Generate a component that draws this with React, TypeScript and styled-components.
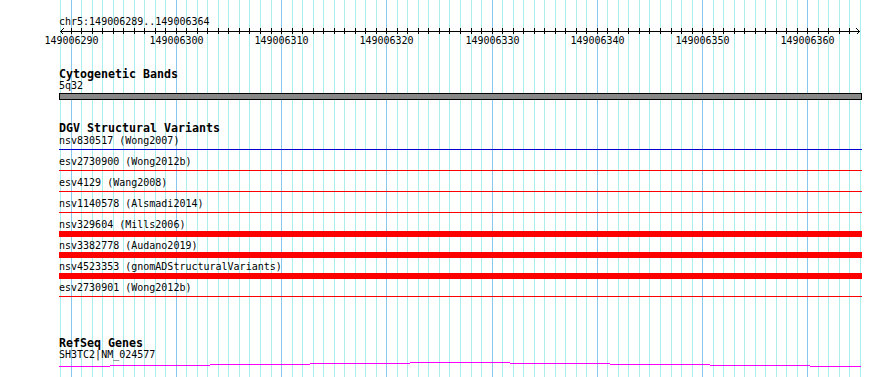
import React from "react";
import styled, { createGlobalStyle } from "styled-components";

const START = 149006289;
const END = 149006364;
const VIEW_LEFT = 60;
const VIEW_WIDTH = 800;
const TRACK_LEFT = 59;
const TRACK_WIDTH = 803;
const BP = VIEW_WIDTH / (END - START + 1);
const BASES = END - START + 1;

// pixel centre of the gridline for base offset i
const xAt = (i: number) => Math.round(VIEW_LEFT + i * BP) + 0.5;

const GlobalStyle = createGlobalStyle`
  html, body {
    margin: 0;
    padding: 0;
    background: #ffffff;
  }
`;

const variants = [
  { name: "nsv830517 (Wong2007)", color: "#0000cc", thick: false },
  { name: "esv2730900 (Wong2012b)", color: "#ff0000", thick: false },
  { name: "esv4129 (Wang2008)", color: "#ff0000", thick: false },
  { name: "nsv1140578 (Alsmadi2014)", color: "#ff0000", thick: false },
  { name: "nsv329604 (Mills2006)", color: "#ff0000", thick: true },
  { name: "nsv3382778 (Audano2019)", color: "#ff0000", thick: true },
  { name: "nsv4523353 (gnomADStructuralVariants)", color: "#ff0000", thick: true },
  { name: "esv2730901 (Wong2012b)", color: "#ff0000", thick: false },
];

// transcript drawn as a slightly sloped 1px line (x from, x to, y)
const geneSteps: [number, number, number][] = [
  [59, 110, 366],
  [110, 210, 365],
  [210, 310, 364],
  [310, 410, 363],
  [410, 510, 362],
  [510, 610, 363],
  [610, 710, 364],
  [710, 810, 365],
  [810, 861, 366],
];

export default function App() {
  const offsets = Array.from({ length: BASES + 1 }, (_, i) => i);

  return (
    <Page>
      <GlobalStyle />
      <Grid width={890} height={377}>
        {offsets.map((i) => (
          <line
            key={i}
            x1={xAt(i)}
            x2={xAt(i)}
            y1={0}
            y2={377}
            stroke={(START + i) % 10 === 0 ? "#88c8ee" : "#aaeeee"}
            strokeWidth={1}
          />
        ))}
      </Grid>

      <Tracks>
        <Locus>chr5:149006289..149006364</Locus>
        <Axis width={TRACK_WIDTH} height={20}>
          <line x1={1} x2={801} y1={3.5} y2={3.5} stroke="#000" />
          <polyline points="4.5,0.5 1.5,3.5 4.5,6.5" fill="none" stroke="#000" />
          <polyline points="797.5,0.5 800.5,3.5 797.5,6.5" fill="none" stroke="#000" />
          {offsets.slice(1, BASES).map((i) => (
            <line
              key={i}
              x1={xAt(i) - TRACK_LEFT}
              x2={xAt(i) - TRACK_LEFT}
              y1={0}
              y2={6}
              stroke="#000"
            />
          ))}
          {offsets
            .filter((i) => (START + i) % 10 === 0)
            .map((i) => (
              <AxisLabel key={i} x={xAt(i) - TRACK_LEFT} y={16} textAnchor="middle">
                {START + i}
              </AxisLabel>
            ))}
        </Axis>

        <Track $top={20}>
          <TrackTitle>Cytogenetic Bands</TrackTitle>
          <TrackLabel>5q32</TrackLabel>
          <Band />
        </Track>

        <Track $top={22}>
          <TrackTitle>DGV Structural Variants</TrackTitle>
          <Rows>
            {variants.map((v) => (
              <Row key={v.name}>
                <TrackLabel>{v.name}</TrackLabel>
                <Feature $color={v.color} $thick={v.thick} />
              </Row>
            ))}
          </Rows>
        </Track>

        <Track $top={34}>
          <TrackTitle>RefSeq Genes</TrackTitle>
          <TrackLabel>SH3TC2|NM_024577</TrackLabel>
          <Gene width={TRACK_WIDTH} height={6}>
            {geneSteps.map(([x1, x2, y]) => (
              <rect
                key={x1}
                x={x1 - TRACK_LEFT}
                y={y - 361}
                width={x2 - x1}
                height={1}
                fill="#ff00ff"
              />
            ))}
          </Gene>
        </Track>
      </Tracks>
    </Page>
  );
}

const Page = styled.div`
  position: relative;
  width: 890px;
  height: 377px;
  overflow: hidden;
  background: #ffffff;
  color: #000000;
  font-family: "DejaVu Sans Mono", "Liberation Mono", monospace;
`;

const Grid = styled.svg`
  position: absolute;
  top: 0;
  left: 0;
  shape-rendering: crispEdges;
`;

const Tracks = styled.div`
  position: relative;
  display: flex;
  flex-direction: column;
  width: ${TRACK_WIDTH}px;
  padding-left: ${TRACK_LEFT}px;
`;

const Locus = styled.div`
  margin-top: 16px;
  font-size: 10px;
  line-height: 12px;
  white-space: nowrap;
`;

const Axis = styled.svg`
  display: block;
  shape-rendering: crispEdges;
  overflow: visible;
`;

const AxisLabel = styled.text`
  font-family: "DejaVu Sans Mono", "Liberation Mono", monospace;
  font-size: 10px;
  fill: #000000;
`;

const Track = styled.section<{ $top: number }>`
  display: flex;
  flex-direction: column;
  margin-top: ${(p) => p.$top}px;
`;

const TrackTitle = styled.div`
  font-size: 11.63px;
  font-weight: bold;
  line-height: 12px;
  white-space: nowrap;
`;

const TrackLabel = styled.div`
  font-size: 10px;
  line-height: 12px;
  white-space: nowrap;
`;

const Band = styled.div`
  box-sizing: border-box;
  margin-top: 1px;
  height: 7px;
  border: 1px solid #000000;
  background: #888888;
`;

const Rows = styled.div`
  display: flex;
  flex-direction: column;
  margin-top: 1px;
`;

const Row = styled.div`
  display: flex;
  flex-direction: column;
  height: 21px;
`;

const Feature = styled.div<{ $color: string; $thick: boolean }>`
  height: ${(p) => (p.$thick ? 6 : 1)}px;
  margin-top: ${(p) => (p.$thick ? 0 : 2)}px;
  background: ${(p) => p.$color};
`;

const Gene = styled.svg`
  display: block;
  shape-rendering: crispEdges;
`;
